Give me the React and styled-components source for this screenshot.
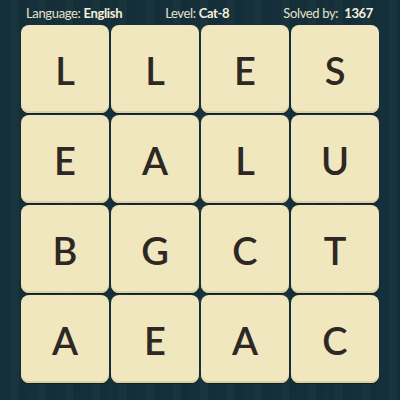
import React from 'react'
import styled, {createGlobalStyle} from 'styled-components'

const GlobalStyle = createGlobalStyle`
  html, body {
    margin: 0;
    padding: 0;
    width: 400px;
    height: 400px;
    overflow: hidden;
  }
  body {
    background: #14303a;
    font-family: Lato, "Open Sans", sans-serif;
  }
`;

const Screen = styled.div`
  width: 400px;
  height: 400px;
  box-sizing: border-box;
  padding: 0 21px 0 21px;
  background:
    repeating-linear-gradient(90deg,
      rgba(255,255,255,0.00) 0px,
      rgba(255,255,255,0.00) 11px,
      rgba(255,255,255,0.02) 11px,
      rgba(255,255,255,0.02) 19px,
      rgba(0,0,0,0.03) 19px,
      rgba(0,0,0,0.03) 27px),
    #15303a;
  display: flex;
  flex-direction: column;
`;

const Header = styled.div`
  height: 25px;
  display: flex;
  align-items: center;
  justify-content: space-between;
  padding: 0 6px 0 5px;
  color: #e6e1cc;
  font-size: 13px;
  letter-spacing: -0.35px;
  b {
    font-weight: 700;
    color: #f6f1dc;
  }
`;

const Stat = styled.span`
  margin-right: ${props => props.shift || 0}px;
`;

const Board = styled.div`
  display: grid;
  grid-template-columns: repeat(4, 88px);
  grid-auto-rows: 88px;
  gap: 2px;
`;

const Tile = styled.div`
  background: #f1e7bf;
  border-radius: 8px;
  box-shadow: inset 0 -2px 0 #ddd1a4, 0 1px 1px rgba(0,0,0,0.35);
  display: flex;
  align-items: center;
  justify-content: center;
  color: #2d2823;
  font-size: 38px;
  font-weight: 600;
  padding-top: 2px;
  box-sizing: border-box;
`;

const letters = ['L','L','E','S','E','A','L','U','B','G','C','T','A','E','A','C'];

function App() {
  return (
    <>
      <GlobalStyle />
      <Screen>
        <Header>
          <Stat>Language: <b>English</b></Stat>
          <Stat shift={11}>Level: <b>Cat-8</b></Stat>
          <Stat>Solved by:&nbsp; <b>1367</b></Stat>
        </Header>
        <Board>
          {letters.map((l, i) => (
            <Tile key={i}>{l}</Tile>
          ))}
        </Board>
      </Screen>
    </>
  )
}

export default App
